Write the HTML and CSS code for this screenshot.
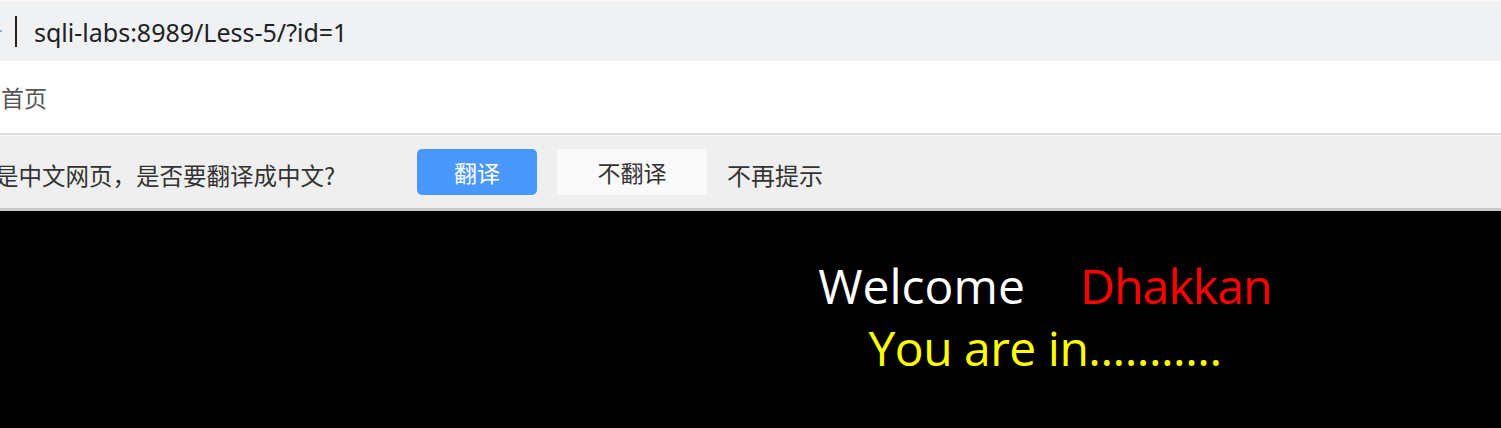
FILE: index.html
```html
<!DOCTYPE html>
<html lang="zh">
<head>
<meta charset="utf-8">
<title>Less-5</title>
<link rel="stylesheet" href="styles.css">
</head>
<body>
<div class="addr-bar">
  <span class="edge-mark"></span>
  <span class="divider"></span>
  <span class="url">sqli-labs:8989/Less-5/?id=1</span>
</div>
<div class="bookmarks">
  <span class="bm">首页</span>
</div>
<div class="translate-bar">
  <span class="prompt">是中文网页，是否要翻译成中文?</span>
  <button class="btn btn-primary">翻译</button>
  <button class="btn btn-plain">不翻译</button>
  <span class="never">不再提示</span>
</div>
<main class="page">
  <div class="line1">
    <span class="welcome">Welcome</span>
    <span class="name">Dhakkan</span>
  </div>
  <div class="line2">You are in...........</div>
</main>
</body>
</html>
```
FILE: styles.css
```css
html, body {
  margin: 0;
  padding: 0;
  background: #000;
  overflow: hidden;
}
body {
  width: 1501px;
  height: 428px;
  font-family: "Noto Sans", "Noto Sans CJK SC", sans-serif;
}
.addr-bar {
  height: 61px;
  background: #f0f1f3;
  border-top: 1px solid #f7f7f8;
  box-sizing: border-box;
  display: flex;
  align-items: center;
  position: relative;
}
.edge-mark {
  position: absolute;
  left: 0;
  top: 29px;
  width: 2px;
  height: 2px;
  background: #7fb2e0;
}
.divider {
  width: 2px;
  height: 31px;
  background: #222;
  margin-left: 15px;
  margin-top: 1px;
}
.url {
  margin-left: 17px;
  font-family: "Noto Sans", sans-serif;
  font-size: 25px;
  color: #202124;
  margin-top: 1px;
}
.bookmarks {
  height: 72px;
  background: #fff;
  display: flex;
  align-items: center;
}
.bm {
  margin-left: 1px;
  font-family: "Noto Sans CJK SC", sans-serif;
  font-size: 23px;
  color: #555;
  margin-top: 0;
}
.translate-bar {
  height: 73px;
  background: #efefef;
  border-top: 2px solid #dcdcdc;
  box-shadow: inset 0 1px 0 #fafafa;
  border-bottom: 3px solid #c9c9c9;
  box-sizing: content-box;
  display: flex;
  align-items: center;
  font-family: "Noto Sans CJK SC", sans-serif;
  color: #333;
}
.prompt {
  margin-left: -5px;
  font-size: 23.5px;
  width: 422px;
  margin-top: 6px;
  white-space: nowrap;
}
.btn {
  border: none;
  height: 46px;
  border-radius: 5px;
  font-family: "Noto Sans CJK SC", sans-serif;
  font-size: 23px;
  padding: 0;
  margin-top: 1px;
}
.btn-primary {
  width: 120px;
  background: #4a98fe;
  color: #fff;
}
.btn-plain {
  width: 150px;
  margin-left: 20px;
  background: #fafafa;
  color: #333;
}
.never {
  margin-left: 20px;
  font-size: 24px;
  margin-top: 6px;
}
.page {
  background: #000;
  height: 217px;
  display: flex;
  flex-direction: column;
  align-items: center;
  padding-left: 589px;
  padding-top: 44px;
  box-sizing: border-box;
  font-family: "Open Sans", "Noto Sans", sans-serif;
}
.line1 {
  display: flex;
  gap: 55px;
  font-size: 48px;
  line-height: 62px;
}
.welcome { color: #fff; }
.name { color: #f00; letter-spacing: -0.8px; }
.line2 {
  color: #ff0;
  font-size: 48px;
  line-height: 62px;
  letter-spacing: -0.5px;
}
```
